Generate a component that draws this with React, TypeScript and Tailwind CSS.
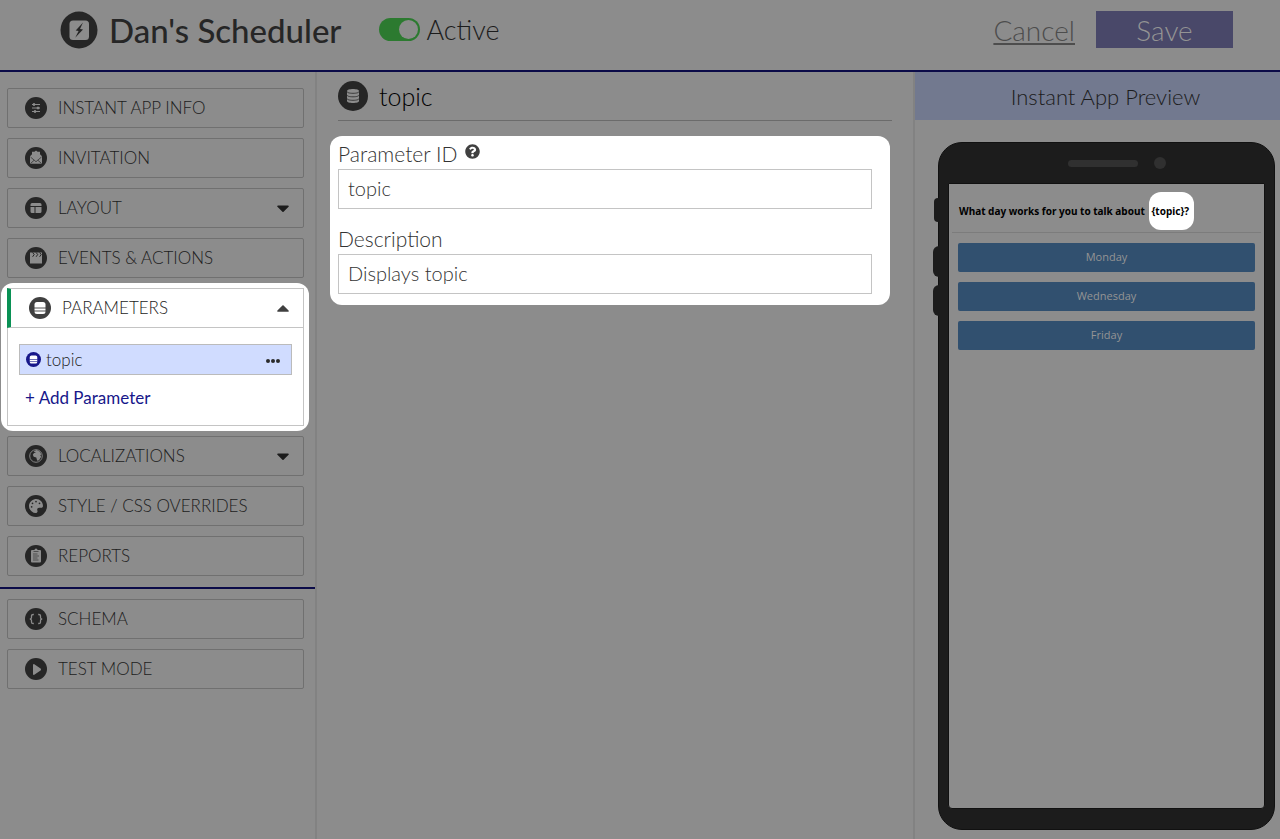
import React, { useState } from "react";
import {
  FaCaretDown,
  FaCaretUp,
  FaPalette,
  FaPlay,
  FaQuestionCircle,
} from "react-icons/fa";

const SlidersIcon = () => (
  <svg viewBox="0 0 22 22" className="size-[22px]" stroke="currentColor" strokeWidth="1" fill="currentColor">
    <path d="M7 7.5h8M7 11h8M7 14.5h8" />
    <circle cx="9" cy="7.5" r="1" />
    <circle cx="13" cy="11" r="1" />
    <circle cx="10" cy="14.5" r="1" />
  </svg>
);

const InvitationIcon = () => (
  <svg viewBox="0 0 22 22" className="size-[22px]">
    <path d="M11 3.600l1.600 1.200h2.400v2.400l2 2v7.600H5V9.200l2-2V4.800h2.400z" fill="currentColor" />
    <path d="M5.500 10l3.700 3.200-3.700 3.300M16.500 10l-3.700 3.200 3.700 3.300M9.200 13.200L11 14.700l1.800-1.500" fill="none" stroke="#262626" strokeWidth="0.700" />
  </svg>
);

const LayoutIcon = () => (
  <svg viewBox="0 0 22 22" className="size-[22px]" fill="currentColor">
    <path d="M7 6h8a1.500 1.500 0 0 1 1.500 1.500V9h-11V7.500A1.500 1.500 0 0 1 7 6zM5.500 10h4v6H7a1.500 1.500 0 0 1-1.500-1.500zM10.500 10h6v4.500A1.500 1.500 0 0 1 15 16h-4.500z" />
  </svg>
);

const EventsIcon = () => (
  <svg viewBox="0 0 22 22" className="size-[22px]">
    <path d="M5 5.500h12v11H5z" fill="currentColor" />
    <path d="M7.600 5.500l1.600 2-1.600 2.300M11.100 5.500l1.600 2-1.600 2.300M14.600 5.500l1.600 2-1.600 2.300" fill="none" stroke="#262626" strokeWidth="1" />
  </svg>
);

const ParametersIcon = ({ className }: { className: string }) => (
  <svg viewBox="0 0 22 22" className={className}>
    <circle cx="11" cy="11" r="11" fill="currentColor" />
    <rect x="5.500" y="5" width="11" height="12" rx="2.500" fill="#fff" />
    <path d="M5 11h12M5 14h12" stroke="currentColor" strokeWidth="0.900" />
  </svg>
);

const GlobeIcon = () => (
  <svg viewBox="0 0 22 22" className="size-[22px]">
    <circle cx="11" cy="11" r="6.300" fill="none" stroke="currentColor" strokeWidth="0.900" />
    <path d="M8.500 6.500l3-1.500 3 1.500 1.800 2.800-1 .9.900 1.600-2.200 3.400-1.800.6-.9-3.400-2.600-.6-.9-2 1.200-1.800 2-.4z" fill="currentColor" />
  </svg>
);

const ReportsIcon = () => (
  <svg viewBox="0 0 22 22" className="size-[22px]">
    <path d="M7 5h2.500a1.500 1.500 0 0 1 3 0H15a1 1 0 0 1 1 1v10.500a1 1 0 0 1-1 1H7a1 1 0 0 1-1-1V6a1 1 0 0 1 1-1z" fill="currentColor" />
    <path d="M8.500 6.500h5M8 9h4.500M8 11h6M8 13h4.500M8 15h5.500" stroke="#262626" strokeWidth="0.600" />
  </svg>
);

const BracesIcon = () => (
  <svg viewBox="0 0 22 22" className="size-[22px]" fill="none" stroke="currentColor" strokeWidth="1.300">
    <path d="M8.800 6.500H8.200q-1.700 0-1.700 1.300v1.700Q6.500 11 4.800 11q1.700 0 1.700 1.500v1.700q0 1.300 1.700 1.300h.6M13.200 6.500h.6q1.700 0 1.700 1.300v1.700q0 1.500 1.700 1.500-1.700 0-1.700 1.500v1.700q0 1.300-1.700 1.300h-.6" />
  </svg>
);

const BoltLogo = () => (
  <svg viewBox="0 0 38 38" className="size-[38px]">
    <circle cx="19" cy="19" r="18.500" fill="#262626" />
    <rect x="9.500" y="9.500" width="19.500" height="19.500" rx="3.500" fill="#8c8c8c" />
    <path d="M23 11.500l-7.300 8 2.900.4-3.400 6.800 7.800-8.100-3-.6z" fill="#262626" />
  </svg>
);

const DatabaseIcon = () => (
  <svg viewBox="0 0 30 30" className="size-[30px]">
    <circle cx="15" cy="15" r="15" fill="#262626" />
    <path d="M9 10v10c0 1.200 2.700 2 6 2s6-.8 6-2V10c0-1.200-2.700-2-6-2s-6 .8-6 2z" fill="#8c8c8c" />
    <path d="M9 10.500c0 1.200 2.700 1.800 6 1.800s6-.6 6-1.800M9 14c0 1.200 2.700 1.800 6 1.800s6-.6 6-1.800M9 17.500c0 1.200 2.700 1.800 6 1.800s6-.6 6-1.800" fill="none" stroke="#262626" strokeWidth="0.800" />
  </svg>
);

interface NavItemProps {
  label: string;
  icon: React.ReactNode;
  expandable?: boolean;
}

const NavItem = ({ label, icon, expandable }: NavItemProps) => (
  <button className="flex h-10 w-full items-center rounded-xs border border-[#707070] pr-[10px] pl-[17px] text-[17px] font-light text-[#1c1c1c]">
    <span className="mr-[11px] flex size-[22px] items-center justify-center rounded-full bg-[#262626] text-[#8c8c8c]">
      {icon}
    </span>
    {label}
    {expandable && <FaCaretDown className="ml-auto size-5 text-[#1c1c1c]" />}
  </button>
);

const topItems: NavItemProps[] = [
  { label: "INSTANT APP INFO", icon: <SlidersIcon /> },
  { label: "INVITATION", icon: <InvitationIcon /> },
  { label: "LAYOUT", icon: <LayoutIcon />, expandable: true },
  { label: "EVENTS & ACTIONS", icon: <EventsIcon /> },
];

const middleItems: NavItemProps[] = [
  { label: "LOCALIZATIONS", icon: <GlobeIcon />, expandable: true },
  { label: "STYLE / CSS OVERRIDES", icon: <FaPalette className="size-[14px]" /> },
  { label: "REPORTS", icon: <ReportsIcon /> },
];

const bottomItems: NavItemProps[] = [
  { label: "SCHEMA", icon: <BracesIcon /> },
  { label: "TEST MODE", icon: <FaPlay className="ml-[2px] h-[11px] w-2" preserveAspectRatio="none" /> },
];

const days = ["Monday", "Wednesday", "Friday"];

const App = () => {
  const [active, setActive] = useState(true);
  const [parameterId, setParameterId] = useState("topic");
  const [description, setDescription] = useState("Displays topic");

  return (
    <div className="flex min-h-screen flex-col bg-[#8c8c8c] font-['Lato',sans-serif] text-[#1c1c1c]">
      <header className="flex h-[72px] items-center border-b-2 border-[#0b0b48] pr-[47px] pb-[11px] pl-[60px]">
        <BoltLogo />
        <h1 className="ml-[11px] text-[33px] leading-9 font-medium text-[#262626]">Dan's Scheduler</h1>
        <label className="ml-[38px] flex items-center gap-[6px] text-[27px] leading-9 font-light">
          <input
            type="checkbox"
            checked={active}
            onChange={(e) => setActive(e.target.checked)}
            className="peer sr-only"
          />
          <span className="flex h-[23px] w-[41px] items-center rounded-full bg-[#555] p-[2px] peer-checked:justify-end peer-checked:bg-[#2c7a30]">
            <span className="size-[19px] rounded-full bg-[#8c8c8c]" />
          </span>
          Active
        </label>
        <a href="#" className="ml-auto text-[28px] leading-9 font-light text-[#4d4d4d] underline underline-offset-2">
          Cancel
        </a>
        <button className="ml-[21px] h-[37px] w-[137px] bg-[#494869] text-[28px] leading-9 font-light text-[#949494]">
          Save
        </button>
      </header>

      <div className="flex flex-1">
        <nav className="flex w-[317px] shrink-0 flex-col border-r-2 border-[#828282] pt-4">
          <div className="flex flex-col gap-[10px] pr-[11px] pl-[7px]">
            {topItems.map((item) => (
              <NavItem key={item.label} {...item} />
            ))}
          </div>

          <div className="mt-[5px] mr-[6px] mb-[5px] ml-px rounded-xl bg-white p-[5px] pl-[6px]">
            <button className="flex h-10 w-full items-center border border-l-4 border-[#c4c4c4] border-l-[#0a9155] pr-[10px] pl-[18px] text-[17px] font-light text-[#1c1c1c]">
              <ParametersIcon className="mr-[11px] size-[22px] text-[#404040]" />
              PARAMETERS
              <FaCaretUp className="ml-auto size-5 text-[#404040]" />
            </button>
            <div className="border border-t-0 border-[#c4c4c4] px-[11px] pt-4 pb-[14px]">
              <div className="flex h-[31px] items-center border border-[#bbb] bg-[#d0dcff] pr-[11px] pl-[6px]">
                <ParametersIcon className="mr-[5px] size-[15px] text-[#17178a]" />
                <span className="text-[17px] leading-6 font-light text-[#1c1c1c]">topic</span>
                <button aria-label="More options" className="ml-auto flex gap-px pt-[2px]">
                  <span className="size-1 rounded-full bg-[#2b2b2b]" />
                  <span className="size-1 rounded-full bg-[#2b2b2b]" />
                  <span className="size-1 rounded-full bg-[#2b2b2b]" />
                </button>
              </div>
              <button className="mt-[10px] ml-[6px] block h-[26px] text-[17px] leading-6 text-[#17178a]">
                + Add Parameter
              </button>
            </div>
          </div>

          <div className="flex flex-col gap-[10px] pr-[11px] pl-[7px]">
            {middleItems.map((item) => (
              <NavItem key={item.label} {...item} />
            ))}
          </div>
          <hr className="mt-[11px] mb-[10px] border-t-2 border-[#0b0b48]" />
          <div className="flex flex-col gap-[10px] pr-[11px] pl-[7px]">
            {bottomItems.map((item) => (
              <NavItem key={item.label} {...item} />
            ))}
          </div>
        </nav>

        <main className="min-w-0 flex-1 px-[21px]">
          <div className="flex h-[49px] items-center gap-[11px] border-b border-[#6b6b6b]">
            <DatabaseIcon />
            <h2 className="text-[25px] leading-8 font-light text-black">topic</h2>
          </div>
          <form className="mt-[15px] mr-[2px] -ml-2 rounded-xl bg-white pt-[3px] pr-[18px] pb-[11px] pl-2 text-[21px] font-light text-[#333]">
            <div className="flex h-[30px] items-center gap-2 leading-7">
              <label htmlFor="parameter-id">Parameter ID</label>
              <FaQuestionCircle className="mb-[6px] size-[15px] text-[#404040]" />
            </div>
            <input
              id="parameter-id"
              value={parameterId}
              onChange={(e) => setParameterId(e.target.value)}
              className="block h-10 w-full border border-[#c4c4c4] px-[9px] pb-[2px] text-[20px]"
            />
            <label htmlFor="description" className="mt-4 block h-[29px] leading-7">
              Description
            </label>
            <input
              id="description"
              value={description}
              onChange={(e) => setDescription(e.target.value)}
              className="block h-10 w-full border border-[#c4c4c4] px-[9px] pb-[2px] text-[20px]"
            />
          </form>
        </main>

        <aside className="flex w-[367px] shrink-0 flex-col border-l-2 border-[#828282]">
          <h2 className="h-12 bg-[#72798f] pl-4 text-center text-[22px] leading-[50px] font-light">Instant App Preview</h2>
          <div className="relative mt-[22px] mr-[5px] mb-[9px] ml-[23px] flex flex-1 flex-col rounded-[24px] border border-[#111] bg-[#1c1c1c] px-[9px] pb-5">
            <span className="absolute top-[55px] -left-[5px] h-6 w-[5px] rounded-l-sm bg-[#1c1c1c]" />
            <span className="absolute top-[103px] -left-[6px] h-[31px] w-[6px] rounded-l-md bg-[#1c1c1c]" />
            <span className="absolute top-[142px] -left-[6px] h-[31px] w-[6px] rounded-l-md bg-[#1c1c1c]" />
            <div className="flex h-10 items-center justify-end gap-4 pr-[99px]">
              <span className="h-[7px] w-[70px] rounded-full bg-[#303030]" />
              <span className="size-3 rounded-full bg-[#303030]" />
            </div>
            <div className="flex-1 rounded-b-sm border border-[#111] bg-[#8c8c8c] px-[3px] font-['Open_Sans',sans-serif]">
              <p className="h-[49px] border-b border-[#7c7c7c] pt-[17px] pl-[7px] font-['Noto_Sans',sans-serif] text-[10px] leading-5 font-bold whitespace-nowrap text-black">
                What day works for you to talk about{" "}
                <span className="ml-[2px] rounded-xl bg-white py-[12px] pr-[5px] pl-[2px]">{"{topic}?"}</span>
              </p>
              <div className="flex flex-col gap-[10px] px-[6px] pt-[10px]">
                {days.map((day) => (
                  <button key={day} className="h-[29px] rounded-xs bg-[#31506f] text-[11px] text-[#949494]">
                    {day}
                  </button>
                ))}
              </div>
            </div>
          </div>
        </aside>
      </div>
    </div>
  );
};

export default App;
